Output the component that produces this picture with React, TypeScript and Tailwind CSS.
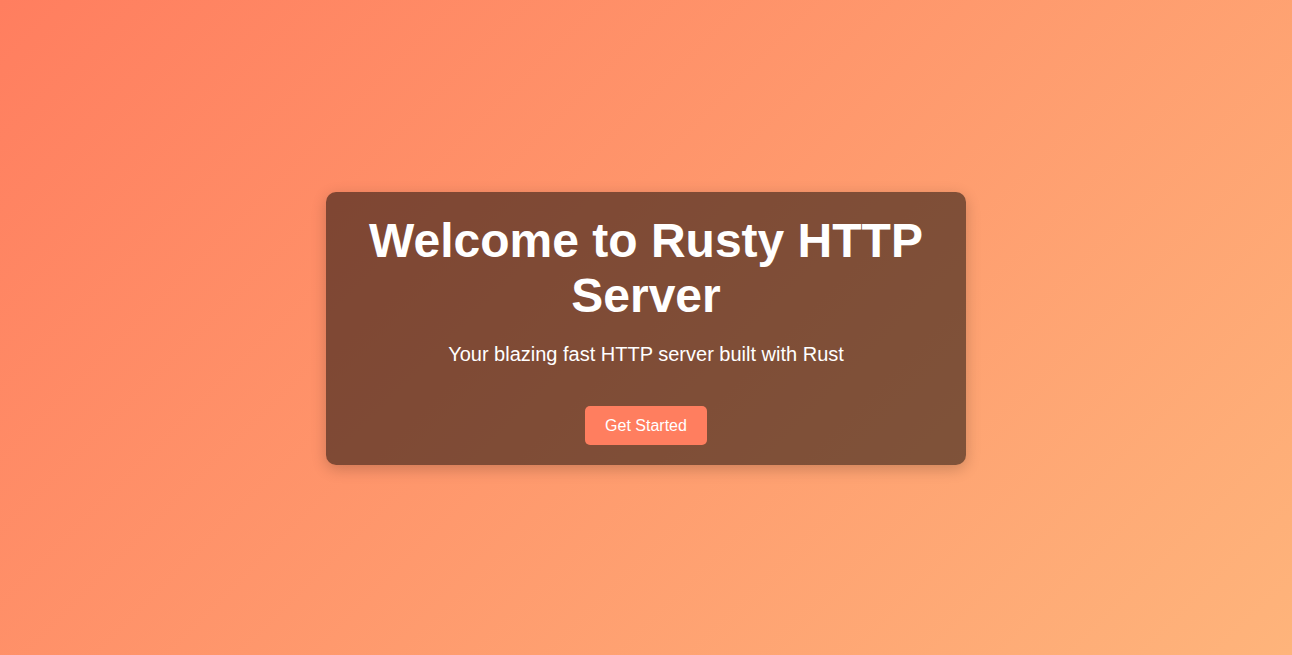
export default function App() {
  return (
    <div
      className="min-h-screen w-full flex items-center justify-center bg-[linear-gradient(135deg,#ff7e5f,#feb47b)] text-white"
      style={{ fontFamily: '"Liberation Sans", Arial, sans-serif' }}
    >
      <div className="w-[640px] mt-[2px] px-5 pt-[21px] pb-5 rounded-[10px] bg-black/50 shadow-[0_4px_15px_rgba(0,0,0,0.2)] text-center">
        <h1 className="text-[48px] leading-[1.15] font-bold m-0">Welcome to Rusty HTTP Server</h1>
        <p className="text-[20px] leading-[23px] mt-5 mb-5">Your blazing fast HTTP server built with Rust</p>
        <div className="pt-5 flex justify-center">
          <button className="bg-[#ff7e5f] text-white text-[16px] h-[39px] px-5 rounded-[5px]">
            Get Started
          </button>
        </div>
      </div>
    </div>
  );
}
